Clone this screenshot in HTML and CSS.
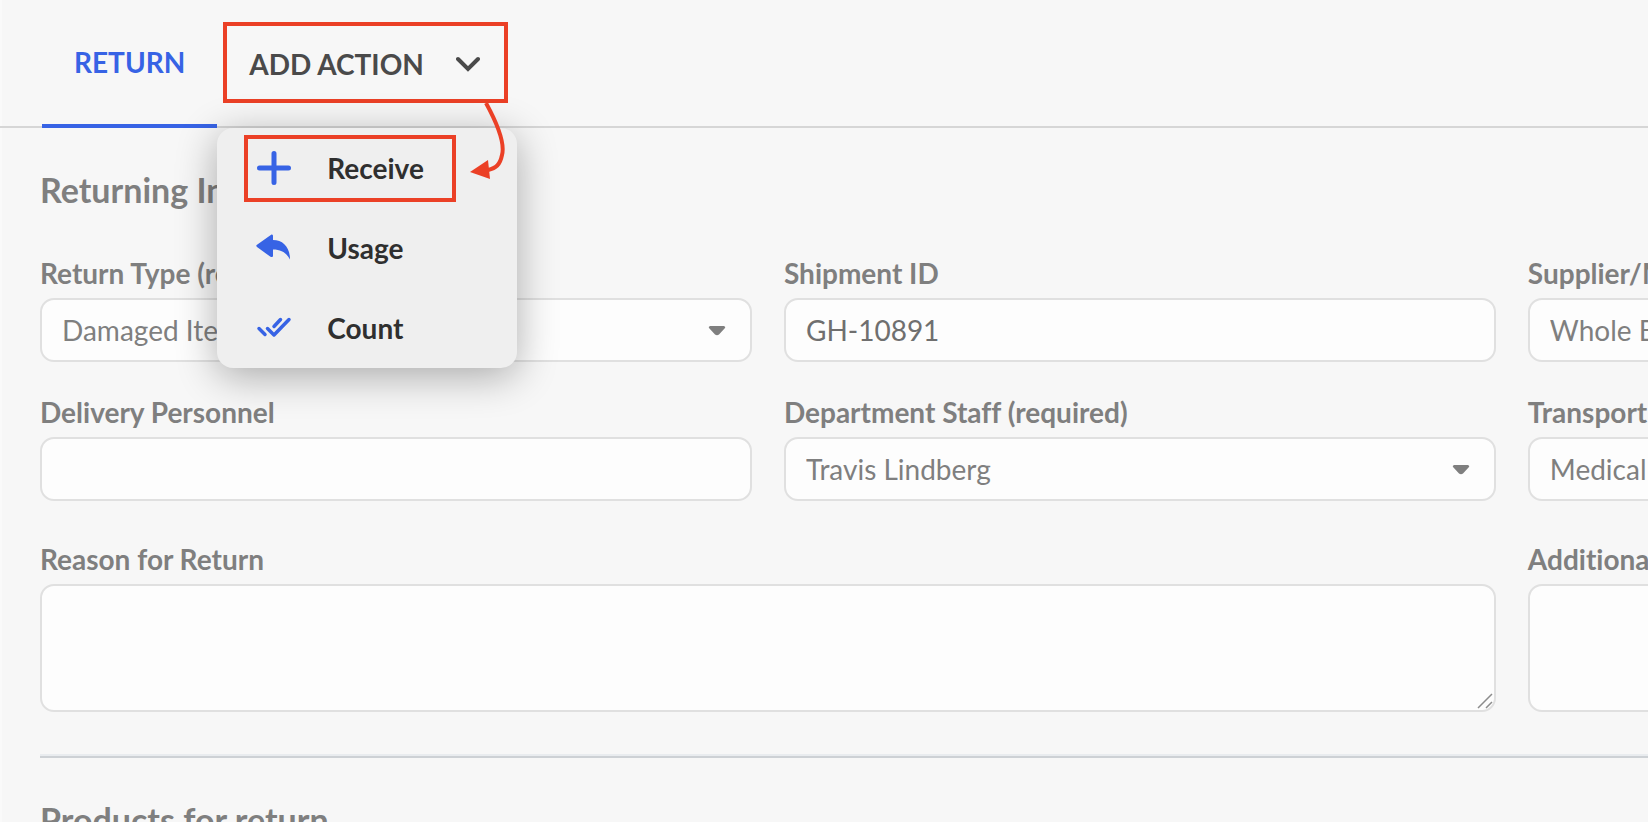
FILE: index.html
```html
<!DOCTYPE html>
<html lang="en">
<head>
    <meta charset="UTF-8">
    <meta name="viewport" content="width=device-width, initial-scale=1.0">
    <title>Return</title>
    <link rel="stylesheet" href="styles.css">
</head>
<body>
    <header class="tabs">
        <a href="#return" class="tab">RETURN</a>
        <div class="action">
            <button type="button" class="action-button" aria-haspopup="true" aria-expanded="true">
                ADD ACTION
                <svg class="chevron" viewBox="0 0 24 16" aria-hidden="true">
                    <path d="M2 3 L12 13 L22 3" />
                </svg>
            </button>
            <div class="menu">
                <button type="button" class="menu-item marked">
                    <svg class="menu-icon" viewBox="0 0 34 34" aria-hidden="true">
                        <path class="thick" d="M17 2.500V31.500M2.500 17H31.500" />
                    </svg>
                    <span>Receive</span>
                </button>
                <button type="button" class="menu-item">
                    <svg class="menu-icon" viewBox="0 0 34 34" aria-hidden="true">
                        <path class="solid" d="M14.500 3.500 C15.500 3.500 16 4 16 5 V9 C26 9 33 16 33 28.500 C29.500 22 24.500 18.500 16 18.500 V24.500 C16 26 15 26.500 13.500 25.800 L0 16 C-1 15 -1 14.500 0 13.700 Z" />
                    </svg>
                    <span>Usage</span>
                </button>
                <button type="button" class="menu-item">
                    <svg class="menu-icon" viewBox="0 0 34 34" aria-hidden="true">
                        <path class="thin" d="M2 17.500 L8 23.500M10.500 17.500 L17 24 L32 8.500M17 15.500 L23.500 8.500" />
                    </svg>
                    <span>Count</span>
                </button>
            </div>
            <svg class="pointer" viewBox="0 0 40 80" aria-hidden="true">
                <path class="pointer-line" d="M19 2 C31 24 38 43 35 54 C33 64 29 67 21 69" />
                <path class="pointer-head" d="M3 71 L21 59 L23 78 Z" />
            </svg>
        </div>
    </header>

    <main class="content">
        <h2 class="title">Returning Information</h2>
        <form class="fields">
            <div class="field">
                <label for="type">Return Type (required)</label>
                <div class="control">
                    <select id="type"><option>Damaged Items</option></select>
                    <svg class="caret" viewBox="0 0 18 10" aria-hidden="true"><path d="M2 0H16Q18 1 17 2L11 8.500Q9 10 7 8.500L1 2Q0 1 2 0Z" /></svg>
                </div>
            </div>
            <div class="field">
                <label for="shipment">Shipment ID</label>
                <input type="text" id="shipment" class="dark" value="GH-10891">
            </div>
            <div class="field">
                <label for="supplier">Supplier/Manufacturer</label>
                <input type="text" id="supplier" value="Whole Blood">
            </div>
            <div class="field">
                <label for="delivery">Delivery Personnel</label>
                <input type="text" id="delivery">
            </div>
            <div class="field">
                <label for="staff">Department Staff (required)</label>
                <div class="control">
                    <select id="staff"><option>Travis Lindberg</option></select>
                    <svg class="caret" viewBox="0 0 18 10" aria-hidden="true"><path d="M2 0H16Q18 1 17 2L11 8.500Q9 10 7 8.500L1 2Q0 1 2 0Z" /></svg>
                </div>
            </div>
            <div class="field">
                <label for="transport">Transport</label>
                <input type="text" id="transport" value="Medical">
            </div>
            <div class="field wide">
                <label for="reason">Reason for Return</label>
                <div class="control">
                    <textarea id="reason"></textarea>
                    <svg class="grip" viewBox="0 0 16 16" aria-hidden="true"><path d="M1 15 L15 1M9 15 L15 9" /></svg>
                </div>
            </div>
            <div class="field tall">
                <label for="notes">Additional Notes</label>
                <div class="control">
                    <textarea id="notes"></textarea>
                    <svg class="grip" viewBox="0 0 16 16" aria-hidden="true"><path d="M1 15 L15 1M9 15 L15 9" /></svg>
                </div>
            </div>
        </form>
        <hr class="divider">
        <h2 class="title">Products for return</h2>
    </main>
</body>
</html>
```
FILE: styles.css
```css
* {
    box-sizing: border-box;
}
body {
    margin: 0;
    height: 100vh;
    overflow: hidden;
    background: #f7f7f7;
    box-shadow: inset 2px 0 #fafafa;
    color: #7f7f7f;
    font-family: Lato, sans-serif;
    font-size: 28px;
    line-height: 34px;
    font-variant-ligatures: none;
}
button, input, select, textarea {
    font: inherit;
    color: inherit;
}

/* Tab bar */
.tabs {
    display: flex;
    height: 128px;
    padding-left: 42px;
    border-bottom: 2px solid #d6d6d6;
}
.tab {
    height: 128px;
    padding: 45px 32px 0;
    border-bottom: 4px solid #3763e5;
    color: #3763e5;
    font-weight: bold;
    text-decoration: none;
}
.action {
    position: relative;
    height: 128px;
    padding: 22px 6px 0;
}
.action-button {
    display: flex;
    align-items: center;
    gap: 32px;
    height: 81px;
    padding: 2px 24px 0 22px;
    border: 4px solid #eb4026;
    background: none;
    color: #4a4a4a;
    font-weight: bold;
    white-space: nowrap;
    cursor: pointer;
}
.chevron {
    width: 24px;
    height: 16px;
    fill: none;
    stroke: #4a4a4a;
    stroke-width: 4;
    stroke-linecap: round;
}

/* Dropdown menu */
.menu {
    position: absolute;
    top: 100%;
    left: 0;
    z-index: 1;
    width: 300px;
    padding: 7px 27px 6px;
    border-radius: 16px;
    background: #efefef;
    box-shadow: 0 8px 40px rgba(0, 0, 0, 0.32);
}
.menu-item {
    display: flex;
    align-items: center;
    gap: 36px;
    width: 212px;
    height: 67px;
    margin-bottom: 13px;
    padding: 0 9px 2px;
    border: 4px solid transparent;
    background: none;
    color: #2f2f2f;
    font-weight: bold;
    cursor: pointer;
}
.menu-item:last-child {
    margin-bottom: 0;
}
.marked {
    border-color: #eb4026;
}
.menu-icon {
    width: 34px;
    height: 34px;
    overflow: visible;
    fill: none;
    stroke: #3763e5;
    stroke-linecap: round;
    stroke-linejoin: round;
}
.thick {
    stroke-width: 5;
}
.thin {
    stroke-width: 3.5;
}
.solid {
    fill: #3763e5;
    stroke: none;
}
.pointer {
    position: absolute;
    top: 101px;
    left: 250px;
    z-index: 2;
    width: 40px;
    height: 80px;
}
.pointer-line {
    fill: none;
    stroke: #eb4026;
    stroke-width: 4;
}
.pointer-head {
    fill: #eb4026;
}

/* Form */
.content {
    padding: 40px 0 0 40px;
}
.title {
    margin: 0;
    font-size: 34px;
    line-height: 44px;
}
.fields {
    display: grid;
    grid-template-columns: repeat(3, 43.2vw);
    gap: 33px 32px;
    margin-top: 44px;
}
.field {
    display: flex;
    flex-direction: column;
    gap: 8px;
}
.field label {
    font-weight: bold;
}
.wide {
    grid-column: span 2;
}
.wide, .tall {
    margin-top: 8px;
}
.control {
    position: relative;
}
input, select, textarea {
    display: block;
    width: 100%;
    height: 64px;
    padding: 0 20px;
    border: 2px solid #e0e0e0;
    border-radius: 14px;
    background: #fdfdfd;
    appearance: none;
}
textarea {
    height: 128px;
    padding: 12px 20px;
    resize: none;
}
.dark {
    color: #6f6f6f;
}
.caret {
    position: absolute;
    top: 28px;
    right: 26px;
    width: 18px;
    height: 10px;
    fill: #7f7f7f;
    pointer-events: none;
}
.grip {
    position: absolute;
    right: 3px;
    bottom: 3px;
    width: 16px;
    height: 16px;
    stroke: #8c8c8c;
    stroke-width: 1.5;
    pointer-events: none;
}
.divider {
    height: 4px;
    margin: 42px 0 40px;
    border: solid #cdd1d5;
    border-width: 0 0 2px;
    background: #e9ecef;
}
```
